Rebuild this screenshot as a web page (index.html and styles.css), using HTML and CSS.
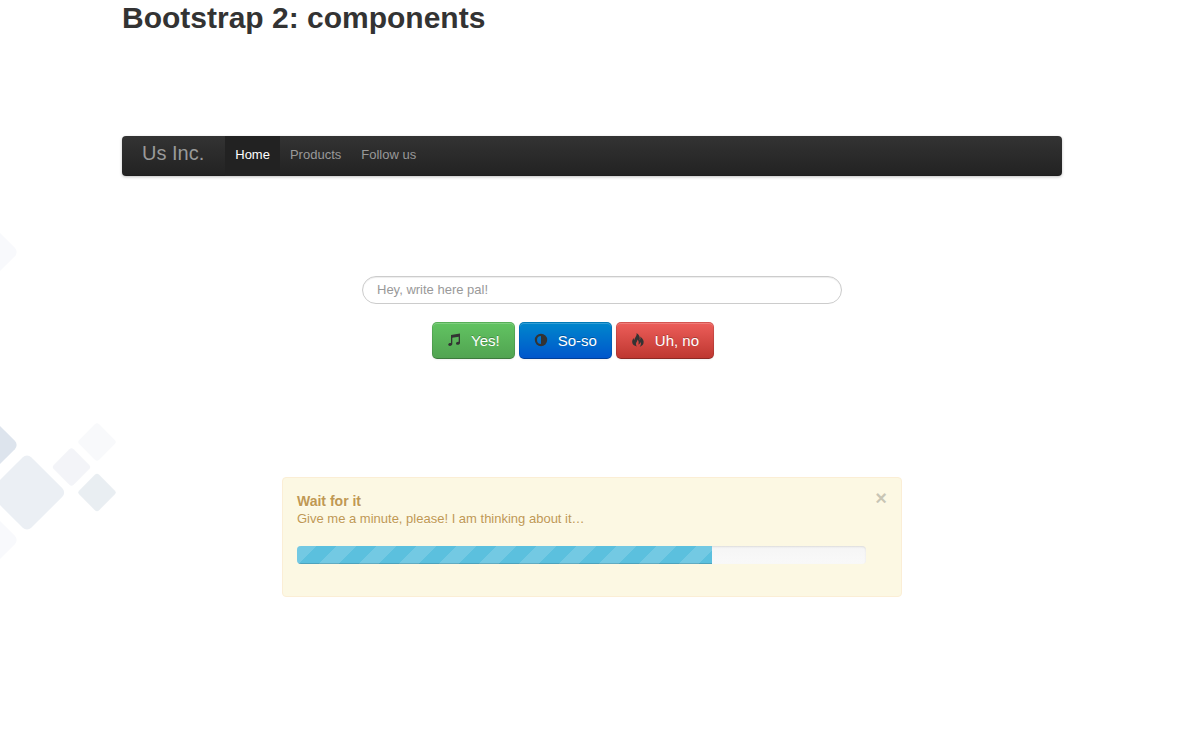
FILE: index.html
```html
<!DOCTYPE html>
<html lang="en">
<head>
<meta charset="utf-8">
<title>Bootstrap 2: components</title>
<link rel="stylesheet" href="styles.css">
</head>
<body>
<svg class="backdrop" width="120" height="560" viewBox="0 0 120 560" aria-hidden="true">
  <g transform="translate(-20.500 252) rotate(45)" fill="#f8f9fc"><rect x="-28" y="-28" width="56" height="56" rx="6"/></g>
  <g transform="translate(-20.500 445) rotate(45)" fill="#dde4ed"><rect x="-28" y="-28" width="56" height="56" rx="6"/></g>
  <g transform="translate(-20.500 540) rotate(45)" fill="#f8f9fc"><rect x="-28" y="-28" width="56" height="56" rx="6"/></g>
  <g transform="translate(27 492.500) rotate(45)" fill="#ebeff4"><rect x="-28" y="-28" width="56" height="56" rx="6"/></g>
  <g transform="translate(97 442) rotate(45)" fill="#f8f9fb"><rect x="-14" y="-14" width="28" height="28" rx="3"/></g>
  <g transform="translate(71.500 467) rotate(45)" fill="#f3f4f8"><rect x="-14" y="-14" width="28" height="28" rx="3"/></g>
  <g transform="translate(97 492.500) rotate(45)" fill="#e9eef2"><rect x="-14" y="-14" width="28" height="28" rx="3"/></g>
</svg>
<main class="container">
  <h1 class="title">Bootstrap 2: components</h1>

  <nav class="navbar">
    <a class="brand" href="#">Us Inc.</a>
    <ul class="nav">
      <li><a class="nav-link active" href="#">Home</a></li>
      <li><a class="nav-link" href="#">Products</a></li>
      <li><a class="nav-link" href="#">Follow us</a></li>
    </ul>
  </nav>

  <form class="form">
    <input class="search" type="text" placeholder="Hey, write here pal!" aria-label="Message">
    <div class="actions">
      <button class="btn btn-success" type="button">
        <svg class="icon" viewBox="0 0 14 14" aria-hidden="true"><path d="M4 2 13 .5v9.200c0 1.300-1 2.100-2.300 2.100-1 0-1.700-.5-1.700-1.300 0-1 1-1.700 2.200-1.700h.5V3.700L5.300 4.800v6c0 1.300-1 2.100-2.400 2.100-1 0-1.700-.5-1.700-1.300 0-1 1-1.700 2.200-1.700H4z"/></svg>
        Yes!
      </button>
      <button class="btn btn-primary" type="button">
        <svg class="icon" viewBox="0 0 14 14" aria-hidden="true"><path fill-rule="evenodd" d="M7 .8a6.200 6.200 0 1 1 0 12.400A6.200 6.200 0 0 1 7 .8zm0 2.200a4 4 0 0 0 0 8z"/></svg>
        So-so
      </button>
      <button class="btn btn-danger" type="button">
        <svg class="icon" viewBox="0 0 14 14" aria-hidden="true"><path d="M5.500 0c2.900 2 3.900 4.300 3.100 7.200.9-1 1-2 .6-3.700 2.900 2.200 4.100 4.800 3.200 7.200-.6 1.400-1.900 2.500-3.700 3 1.400-1.600 1.500-3 .9-4.600-.5 1.400-1.300 2.200-2.300 2.500.7-1.700.5-3.500-.7-5.100-.1 2-1.500 2.700-1.700 4.400 0 .9.300 1.700 1 2.500C3 13 1.400 11.500 1.200 9.300 1.100 7.600 1.700 6.200 2.600 5c.1 1.100.3 1.800.8 2.300C3.300 4.600 6.400 3.200 5.500 0z"/></svg>
        Uh, no
      </button>
    </div>
  </form>

  <section class="alert">
    <div class="alert-body">
      <h2 class="alert-title">Wait for it</h2>
      <p class="alert-text">Give me a minute, please! I am thinking about it…</p>
      <div class="progress" role="progressbar" aria-valuenow="73" aria-valuemin="0" aria-valuemax="100" aria-label="Progress"><div class="bar" style="width:73%"></div></div>
    </div>
    <button class="close" type="button" aria-label="Close">×</button>
  </section>
</main>
</body>
</html>
```
FILE: styles.css
```css
* { box-sizing: border-box; }

body {
  margin: 0;
  padding-left: 6px;
  background: #fff;
  color: #333;
  font: 13px/18px "Liberation Sans", Arial, sans-serif;
}

.backdrop { position: absolute; top: 0; left: 0; z-index: -1; }

.container { max-width: 940px; margin: 0 auto; }

.title { margin: 0 0 100px; font-size: 30px; line-height: 36px; }

.navbar {
  display: flex;
  padding: 0 20px;
  margin-bottom: 100px;
  border-radius: 4px;
  background: linear-gradient(#333, #222);
  box-shadow: 0 1px 3px rgba(0, 0, 0, .25), inset 0 -1px 0 rgba(0, 0, 0, .1);
}
.brand { padding: 7px 21px 13px 0; font-size: 20px; line-height: 20px; color: #999; text-decoration: none; }
.nav { display: flex; margin: 0; padding: 0; list-style: none; }
.nav-link {
  display: block;
  padding: 9px 10px 12px;
  line-height: 19px;
  color: #999;
  text-decoration: none;
}
.nav-link.active { color: #fff; background: #222; }

/* The form column sits in a 500px block with a 20px gutter on its left. */
.form { max-width: 500px; margin: 0 auto 118px; padding-left: 20px; }
.search {
  display: block;
  width: 100%;
  height: 28px;
  padding: 4px 14px 6px;
  border: 1px solid #ccc;
  border-radius: 14px;
  background: #fff;
  box-shadow: inset 0 1px 1px rgba(0, 0, 0, .075);
  color: #555;
  font: inherit;
}
.search::placeholder { color: #999; opacity: 1; }

.actions { display: flex; gap: 4px; margin-top: 18px; padding-left: 70px; }
.btn {
  display: flex;
  align-items: center;
  gap: 10px;
  height: 37px;
  padding: 0 14px;
  border: 1px solid;
  border-color: rgba(0, 0, 0, .1) rgba(0, 0, 0, .1) rgba(0, 0, 0, .25);
  border-radius: 5px;
  background-origin: border-box;
  color: #fff;
  font: 15px/18px "Liberation Sans", Arial, sans-serif;
  text-shadow: 0 -1px 0 rgba(0, 0, 0, .25);
  white-space: nowrap;
  box-shadow: inset 0 1px 0 rgba(255, 255, 255, .2), 0 1px 2px rgba(0, 0, 0, .05);
}
.btn-success { background-image: linear-gradient(#62c462, #51a351); }
.btn-primary { background-image: linear-gradient(#08c, #05c); }
.btn-danger { background-image: linear-gradient(#ee5f5b, #bd362f); }
.icon { width: 14px; height: 14px; margin-bottom: 2px; fill: #333; }

.alert {
  display: flex;
  justify-content: space-between;
  align-items: flex-start;
  max-width: 620px;
  margin: 0 auto;
  padding: 14px;
  border: 1px solid #fbeed5;
  border-radius: 4px;
  background: #fcf8e3;
  color: #c09853;
  text-shadow: 0 1px 0 rgba(255, 255, 255, .5);
}
.alert-body { flex: 0 1 569px; }
.alert-title { margin: 0; font-size: 14px; line-height: 18px; }
.alert-text { margin: 0 0 18px; }
.progress {
  height: 18px;
  margin-bottom: 18px;
  overflow: hidden;
  border-radius: 4px;
  background: linear-gradient(#f5f5f5, #f9f9f9);
  box-shadow: inset 0 1px 2px rgba(0, 0, 0, .1);
}
.bar {
  height: 18px;
  background-color: #5bc0de;
  background-image: linear-gradient(135deg, rgba(255, 255, 255, .15) 25%, transparent 25%, transparent 50%, rgba(255, 255, 255, .15) 50%, rgba(255, 255, 255, .15) 75%, transparent 75%, transparent);
  background-size: 40px 40px;
  box-shadow: inset 0 -1px 0 rgba(0, 0, 0, .15);
}
.close {
  padding: 0;
  border: 0;
  background: none;
  color: #000;
  font: bold 20px/12px "Liberation Sans", Arial, sans-serif;
  text-shadow: 0 1px 0 #fff;
  opacity: .2;
}
```
